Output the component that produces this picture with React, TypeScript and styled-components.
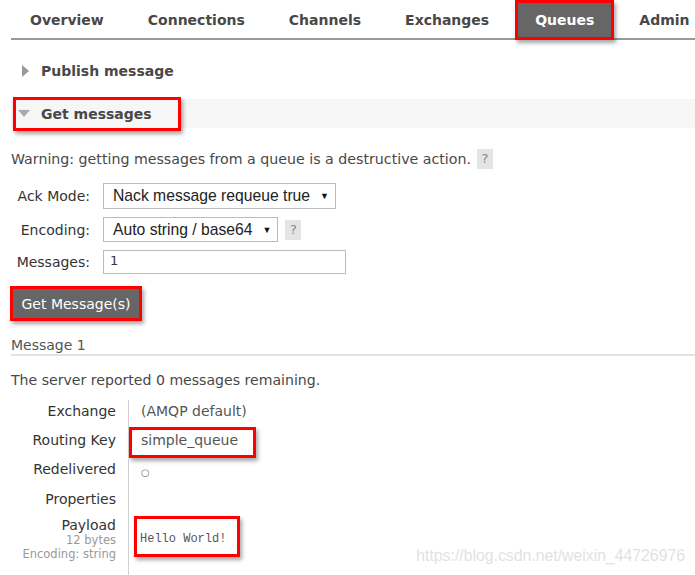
import React from "react";
import styled, { createGlobalStyle, css } from "styled-components";

const Global = createGlobalStyle`
  html, body { margin: 0; padding: 0; background: #fff; }
  body {
    font-family: "DejaVu Sans", Verdana, sans-serif;
    font-size: 14px;
    color: #484848;
  }
`;

const highlight = css`
  border: 3px solid #f00;
  box-shadow: 2px 3px 4px rgba(0, 0, 0, 0.35);
  box-sizing: border-box;
`;

const Page = styled.div`
  position: relative;
  width: 695px;
  height: 575px;
  overflow: hidden;
  padding-left: 11px;
  box-sizing: border-box;
`;

const Nav = styled.nav`
  display: flex;
  height: 38px;
  border-bottom: 2px solid #999;
`;

const NavList = styled.div`
  display: flex;
  margin-left: -3px;
`;

const Tab = styled.div<{ $active?: boolean }>`
  display: flex;
  align-items: center;
  padding: 2px 22px 0;
  font-size: 14px;
  font-weight: bold;
  color: #484848;
  white-space: nowrap;
  ${(p) =>
    p.$active &&
    css`
      ${highlight};
      align-self: flex-start;
      height: 40px;
      margin: 0 3px 0 4px;
      padding: 0 17px;
      background: #666;
      color: #fff;
      position: relative;
      z-index: 1;
    `}
`;

const SectionHeader = styled.div<{ $open?: boolean }>`
  display: flex;
  align-items: center;
  height: 29px;
  margin-top: ${(p) => (p.$open ? "14px" : "16px")};
  background: ${(p) => (p.$open ? "#f6f6f6" : "transparent")};
  font-size: 14px;
  font-weight: bold;
  color: #484848;
`;

const HeaderInner = styled.div<{ $marked?: boolean }>`
  display: flex;
  align-items: center;
  gap: 12px;
  padding-left: 11px;
  ${(p) =>
    p.$marked &&
    css`
      ${highlight};
      height: 34px;
      margin-left: 2px;
      padding: 0 26px 0 2px;
      gap: 11px;
    `}
`;

const Warning = styled.p`
  display: flex;
  align-items: center;
  gap: 6px;
  margin: 21px 0 0;
  color: #484848;
  font-size: 14.2px;
  line-height: 20px;
`;

const Help = styled.span`
  display: inline-flex;
  align-items: center;
  justify-content: center;
  width: 16px;
  height: 20px;
  background: #e4e4e4;
  color: #888;
  font-size: 13px;
`;

const Form = styled.div`
  display: grid;
  grid-template-columns: 79px auto;
  column-gap: 13px;
  row-gap: 8px;
  margin-top: 14px;
  align-items: center;
  justify-content: start;
`;

const Label = styled.label`
  text-align: right;
  font-size: 14px;
  color: #333;
`;

const Control = styled.div`
  display: flex;
  align-items: center;
  gap: 7px;
`;

const FakeSelect = styled.div<{ $h: number }>`
  display: inline-flex;
  align-items: center;
  gap: 10px;
  height: ${(p) => p.$h}px;
  padding: 0 6px 0 9px;
  border: 1px solid #bbb;
  box-sizing: border-box;
  font-family: "Liberation Sans", Arial, sans-serif;
  font-size: 15.7px;
  color: #222;
  background: #fff;
`;

const Caret = styled.span`
  font-size: 9px;
  color: #111;
`;

const Input = styled.div`
  width: 243px;
  height: 24px;
  box-sizing: border-box;
  border: 1px solid #bbb;
  padding: 2px 6px;
  font-size: 13px;
  color: #334;
`;

const Button = styled.button`
  ${highlight};
  margin: 12px 0 0 -1px;
  height: 35px;
  width: 132px;
  padding: 0;
  background: #666;
  color: #fff;
  font-family: "DejaVu Sans", Verdana, sans-serif;
  font-size: 14px;
  display: block;
`;

const MessageTitle = styled.h3`
  margin: 16px 0 0;
  padding-bottom: 1px;
  font-size: 14px;
  font-weight: normal;
  color: #555;
  border-bottom: 2px solid #e2e2e2;
  line-height: 16px;
`;

const ServerNote = styled.p`
  margin: 15px 0 0;
  line-height: 18px;
  color: #484848;
  font-size: 14.1px;
`;

const Details = styled.div`
  display: grid;
  grid-template-columns: 117px 1fr;
  margin-top: 11px;
`;

const Key = styled.div<{ $h: number }>`
  height: ${(p) => p.$h}px;
  padding-right: 12px;
  text-align: right;
  color: #333;
  font-size: 14px;
  display: flex;
  flex-direction: column;
  align-items: flex-end;
  justify-content: center;
  box-sizing: border-box;
`;

const KeyTop = styled(Key)`
  justify-content: flex-start;
  line-height: 16px;
  padding-top: 1px;
`;

const Sub = styled.span`
  font-size: 11.5px;
  color: #999;
  line-height: 14px;
`;

const Val = styled.div<{ $h: number }>`
  height: ${(p) => p.$h}px;
  border-left: 1px solid #d0d0d0;
  display: flex;
  align-items: center;
  padding-left: 12px;
  color: #555;
  font-size: 14px;
`;

const MarkedVal = styled.span<{ $mono?: boolean }>`
  ${highlight};
  display: inline-flex;
  align-items: center;
  align-self: flex-start;
  margin-left: ${(p) => (p.$mono ? "-7px" : "-12px")};
  padding-left: ${(p) => (p.$mono ? "3px" : "9px")};
  width: ${(p) => (p.$mono ? "106px" : "127px")};
  height: ${(p) => (p.$mono ? "41px" : "31px")};
  margin-top: ${(p) => (p.$mono ? "0" : "5px")};
  padding-bottom: ${(p) => (p.$mono ? "0" : "5px")};
  ${(p) =>
    p.$mono &&
    css`
      font-family: "Liberation Mono", "DejaVu Sans Mono", monospace;
      font-size: 12px;
      padding-top: 5px;
    `}
`;

const Circle = styled.span`
  font-size: 10px;
  color: #777;
  padding-top: 6px;
`;

const Watermark = styled.div`
  position: absolute;
  right: 10px;
  bottom: 10px;
  font-family: "Liberation Sans", Arial, sans-serif;
  font-size: 15.8px;
  color: #e2e2e2;
  pointer-events: none;
`;

const RightTri = () => (
  <svg width="7" height="12" viewBox="0 0 7 12">
    <path d="M0 0 L7 6 L0 12 Z" fill="#999" />
  </svg>
);

const DownTri = () => (
  <svg width="12" height="7" viewBox="0 0 12 7">
    <path d="M0 0 L12 0 L6 7 Z" fill="#aaa" />
  </svg>
);

export default function App() {
  const tabs = ["Overview", "Connections", "Channels", "Exchanges", "Queues", "Admin"];
  return (
    <Page>
      <Global />
      <Nav>
        <NavList>
          {tabs.map((t) => (
            <Tab key={t} $active={t === "Queues"}>
              {t}
            </Tab>
          ))}
        </NavList>
      </Nav>

      <SectionHeader>
        <HeaderInner>
          <RightTri />
          Publish message
        </HeaderInner>
      </SectionHeader>

      <SectionHeader $open>
        <HeaderInner $marked>
          <DownTri />
          Get messages
        </HeaderInner>
      </SectionHeader>

      <Warning>
        Warning: getting messages from a queue is a destructive action.
        <Help>?</Help>
      </Warning>

      <Form>
        <Label>Ack Mode:</Label>
        <Control>
          <FakeSelect $h={26}>
            Nack message requeue true <Caret>▼</Caret>
          </FakeSelect>
        </Control>
        <Label>Encoding:</Label>
        <Control>
          <FakeSelect $h={25}>
            Auto string / base64 <Caret>▼</Caret>
          </FakeSelect>
          <Help>?</Help>
        </Control>
        <Label>Messages:</Label>
        <Control>
          <Input>1</Input>
        </Control>
      </Form>

      <Button>Get Message(s)</Button>

      <MessageTitle>Message 1</MessageTitle>
      <ServerNote>The server reported 0 messages remaining.</ServerNote>

      <Details>
        <Key $h={22}>Exchange</Key>
        <Val $h={22}>(AMQP default)</Val>
        <Key $h={35}>Routing Key</Key>
        <Val $h={35}>
          <MarkedVal>simple_queue</MarkedVal>
        </Val>
        <Key $h={24}>Redelivered</Key>
        <Val $h={24}>
          <Circle>○</Circle>
        </Val>
        <Key $h={35}>Properties</Key>
        <Val $h={35} />
        <KeyTop $h={60}>
          Payload
          <Sub>12 bytes</Sub>
          <Sub>Encoding: string</Sub>
        </KeyTop>
        <Val $h={60}>
          <MarkedVal $mono>Hello World!</MarkedVal>
        </Val>
      </Details>

      <Watermark>https://blog.csdn.net/weixin_44726976</Watermark>
    </Page>
  );
}
